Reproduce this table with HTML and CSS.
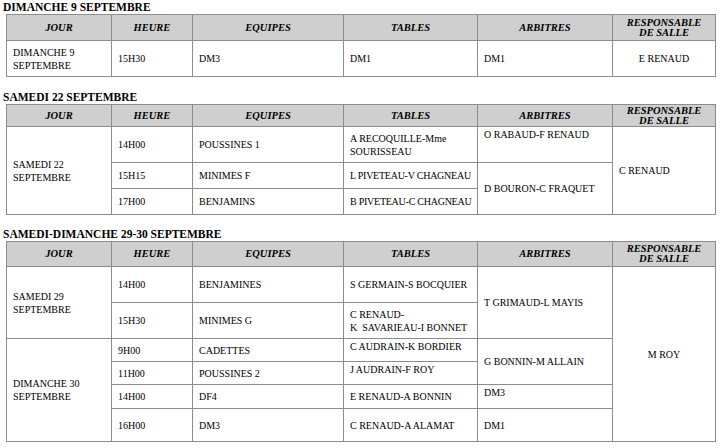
FILE: index.html
```html
<!DOCTYPE html>
<html lang="fr">
<head>
<meta charset="utf-8">
<title>Planning septembre</title>
<link rel="stylesheet" href="styles.css">
</head>
<body>
<div class="page">
  <section class="day">
    <h2 class="day-title">DIMANCHE 9 SEPTEMBRE</h2>
    <table class="planning">
      <colgroup><col class="c1"><col class="c2"><col class="c3"><col class="c4"><col class="c5"><col class="c6"></colgroup>
      <tr class="head h26"><th>JOUR</th><th>HEURE</th><th>EQUIPES</th><th>TABLES</th><th>ARBITRES</th><th>RESPONSABLE<br>DE SALLE</th></tr>
      <tr class="h36"><td>DIMANCHE 9<br>SEPTEMBRE</td><td>15H30</td><td>DM3</td><td>DM1</td><td>DM1</td><td class="center">E RENAUD</td></tr>
    </table>
  </section>

  <section class="day">
    <h2 class="day-title">SAMEDI 22 SEPTEMBRE</h2>
    <table class="planning">
      <colgroup><col class="c1"><col class="c2"><col class="c3"><col class="c4"><col class="c5"><col class="c6"></colgroup>
      <tr class="head h22"><th>JOUR</th><th>HEURE</th><th>EQUIPES</th><th>TABLES</th><th>ARBITRES</th><th>RESPONSABLE<br>DE SALLE</th></tr>
      <tr class="h36"><td rowspan="3">SAMEDI 22<br>SEPTEMBRE</td><td>14H00</td><td>POUSSINES 1</td><td>A RECOQUILLE-Mme<br>SOURISSEAU</td><td class="top">O RABAUD-F RENAUD</td><td rowspan="3">C RENAUD</td></tr>
      <tr class="h26"><td>15H15</td><td>MINIMES F</td><td class="snug">L PIVETEAU-V CHAGNEAU</td><td rowspan="2">D BOURON-C FRAQUET</td></tr>
      <tr class="h26"><td>17H00</td><td>BENJAMINS</td><td class="snug">B PIVETEAU-C CHAGNEAU</td></tr>
    </table>
  </section>

  <section class="day tight">
    <h2 class="day-title">SAMEDI-DIMANCHE 29-30 SEPTEMBRE</h2>
    <table class="planning">
      <colgroup><col class="c1"><col class="c2"><col class="c3"><col class="c4"><col class="c5"><col class="c6"></colgroup>
      <tr class="head h25"><th>JOUR</th><th>HEURE</th><th>EQUIPES</th><th>TABLES</th><th>ARBITRES</th><th>RESPONSABLE<br>DE SALLE</th></tr>
      <tr class="h36"><td rowspan="2">SAMEDI 29<br>SEPTEMBRE</td><td>14H00</td><td>BENJAMINES</td><td>S GERMAIN-S BOCQUIER</td><td rowspan="2">T GRIMAUD-L MAYIS</td><td rowspan="6" class="center">M ROY</td></tr>
      <tr class="h36"><td>15H30</td><td>MINIMES G</td><td>C RENAUD-<br>K&nbsp; SAVARIEAU-I BONNET</td></tr>
      <tr class="h23"><td rowspan="4">DIMANCHE 30<br>SEPTEMBRE</td><td>9H00</td><td>CADETTES</td><td class="top">C AUDRAIN-K BORDIER</td><td rowspan="2">G BONNIN-M ALLAIN</td></tr>
      <tr class="h23"><td>11H00</td><td>POUSSINES 2</td><td class="top">J AUDRAIN-F ROY</td></tr>
      <tr class="h24"><td>14H00</td><td>DF4</td><td>E RENAUD-A BONNIN</td><td class="top">DM3</td></tr>
      <tr class="h33"><td>16H00</td><td>DM3</td><td>C RENAUD-A ALAMAT</td><td>DM1</td></tr>
    </table>
  </section>
</div>
</body>
</html>
```

FILE: styles.css
```css
html, body {
  margin: 0;
  padding: 0;
  background: #ffffff;
}

.page {
  padding: 0 6px 0 3px;
  font-family: "Liberation Serif", "Times New Roman", serif;
  color: #000000;
}

.day + .day {
  margin-top: 13px;
}

.day.tight {
  margin-top: 12px;
}

.day-title {
  margin: 0;
  padding-top: 1px;
  font-size: 11.5px;
  line-height: 13px;
  font-weight: bold;
}

.planning {
  margin-left: 3px;
  width: 709px;
  table-layout: fixed;
  border-collapse: collapse;
  font-size: 10px;
  line-height: 13px;
}

.c1 { width: 105px; }
.c2 { width: 81px; }
.c3 { width: 151px; }
.c4 { width: 134px; }
.c5 { width: 135px; }
.c6 { width: 103px; }

.planning th,
.planning td {
  border: 1px solid #8c8c8c;
  padding: 0 0 0 6px;
  vertical-align: middle;
  text-align: left;
  white-space: nowrap;
  overflow: hidden;
}

.planning th {
  background: #cfcfcf;
  text-align: center;
  font-style: italic;
  font-weight: bold;
  font-size: 10.5px;
  line-height: 10px;
  padding: 0 2px;
}

.planning td.center {
  text-align: center;
  padding: 0;
}

.planning td.top {
  vertical-align: top;
  padding-top: 1px;
}

.planning td.snug {
  letter-spacing: -0.25px;
}

.h22 { height: 22px; }
.h23 { height: 23px; }
.h24 { height: 24px; }
.h25 { height: 25px; }
.h26 { height: 26px; }
.h33 { height: 33px; }
.h36 { height: 36px; }
```
